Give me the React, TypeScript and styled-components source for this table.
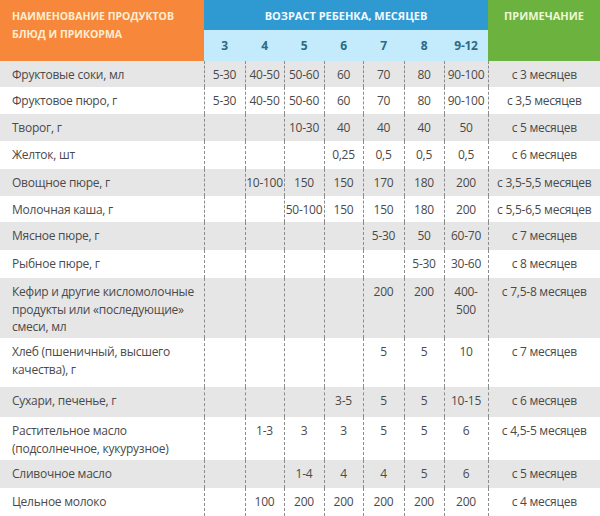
import React from "react";
import styled, { createGlobalStyle } from "styled-components";

const GlobalStyle = createGlobalStyle`
  html, body {
    margin: 0;
    padding: 0;
    background: #fff;
  }
  body {
    font-family: "Open Sans", "Liberation Sans", sans-serif;
  }
`;

const ages = ["3", "4", "5", "6", "7", "8", "9-12"];
const colWidths = [41, 39, 40, 39, 41, 40, 44];

type Row = {
  name: string;
  values: string[];
  note: string;
  h: number;
};

const rows: Row[] = [
  { name: "Фруктовые соки, мл", values: ["5-30", "40-50", "50-60", "60", "70", "80", "90-100"], note: "с 3 месяцев", h: 26 },
  { name: "Фруктовое пюро, г", values: ["5-30", "40-50", "50-60", "60", "70", "80", "90-100"], note: "с 3,5 месяцев", h: 27 },
  { name: "Творог, г", values: ["", "", "10-30", "40", "40", "40", "50"], note: "с 5 месяцев", h: 27 },
  { name: "Желток, шт", values: ["", "", "", "0,25", "0,5", "0,5", "0,5"], note: "с 6 месяцев", h: 28 },
  { name: "Овощное пюре, г", values: ["", "10-100", "150", "150", "170", "180", "200"], note: "с 3,5-5,5 месяцев", h: 27 },
  { name: "Молочная каша, г", values: ["", "", "50-100", "150", "150", "180", "200"], note: "с 5,5-6,5 месяцев", h: 26 },
  { name: "Мясное пюре, г", values: ["", "", "", "", "5-30", "50", "60-70"], note: "с 7 месяцев", h: 28 },
  { name: "Рыбное пюре, г", values: ["", "", "", "", "", "5-30", "30-60"], note: "с 8 месяцев", h: 28 },
  { name: "Кефир и другие кисломолочные продукты или «последующие» смеси, мл", values: ["", "", "", "", "200", "200", "400-\n500"], note: "с 7,5-8 месяцев", h: 60 },
  { name: "Хлеб (пшеничный, высшего качества), г", values: ["", "", "", "", "5", "5", "10"], note: "с 7 месяцев", h: 49 },
  { name: "Сухари, печенье, г", values: ["", "", "", "3-5", "5", "5", "10-15"], note: "с 6 месяцев", h: 30 },
  { name: "Растительное масло (подсолнечное, кукурузное)", values: ["", "1-3", "3", "3", "5", "5", "6"], note: "с 4,5-5 месяцев", h: 43 },
  { name: "Сливочное масло", values: ["", "", "1-4", "4", "4", "5", "6"], note: "с 5 месяцев", h: 28 },
  { name: "Цельное молоко", values: ["", "100", "200", "200", "200", "200", "200"], note: "с 4 месяцев", h: 28 },
];

const Table = styled.table`
  width: 600px;
  border-collapse: collapse;
  table-layout: fixed;
  font-size: 12px;
  letter-spacing: -0.25px;
  color: #4a4a4a;
`;

const HeadCell = styled.th<{ $bg: string }>`
  background: ${(p) => p.$bg};
  color: #fdeed3;
  font-size: 10.5px;
  font-weight: 700;
  letter-spacing: 0;
  text-transform: uppercase;
  padding: 0;
  vertical-align: top;
`;

const NameHead = styled(HeadCell)`
  text-align: left;
  padding: 7px 12px 0;
  line-height: 18px;
`;

const AgeHead = styled(HeadCell)`
  height: 30px;
  color: #f4faff;
  font-size: 11px;
  text-align: center;
  vertical-align: middle;
`;

const NoteHead = styled(HeadCell)`
  color: #eef7d6;
  font-size: 11px;
  text-align: center;
  padding-top: 8px;
`;

const AgeCell = styled.th`
  background: #c4ebfb;
  color: #2c6b86;
  font-size: 12px;
  font-weight: 700;
  height: 31px;
  padding: 0;
  text-align: center;
  vertical-align: middle;
`;

const BodyRow = styled.tr<{ $shaded: boolean }>`
  background: ${(p) => (p.$shaded ? "#e6e6e6" : "#ffffff")};
`;

const NameCell = styled.td`
  padding: 5px 8px 0 12px;
  line-height: 17.5px;
  vertical-align: top;
  text-align: left;
`;

const ValueCell = styled.td`
  padding: 5px 0 0;
  line-height: 17.5px;
  vertical-align: top;
  text-align: center;
  border-left: 1px dashed #8c8c8c;
  white-space: pre;
  overflow: visible;
`;

const NoteCell = styled(ValueCell)``;

export default function App() {
  return (
    <>
      <GlobalStyle />
      <Table>
        <colgroup>
          <col style={{ width: 204 }} />
          {colWidths.map((w, i) => (
            <col key={i} style={{ width: w }} />
          ))}
          <col style={{ width: 112 }} />
        </colgroup>
        <thead>
          <tr>
            <NameHead $bg="#f7883b" rowSpan={2}>
              Наименование продуктов
              <br />
              блюд и прикорма
            </NameHead>
            <AgeHead $bg="#2f9ad2" colSpan={7}>
              Возраст ребенка, месяцев
            </AgeHead>
            <NoteHead $bg="#6bb23f" rowSpan={2}>
              Примечание
            </NoteHead>
          </tr>
          <tr>
            {ages.map((a) => (
              <AgeCell key={a}>{a}</AgeCell>
            ))}
          </tr>
        </thead>
        <tbody>
          {rows.map((r, i) => (
            <BodyRow key={r.name} $shaded={i % 2 === 0} style={{ height: r.h }}>
              <NameCell>{r.name}</NameCell>
              {r.values.map((v, j) => (
                <ValueCell key={j}>{v}</ValueCell>
              ))}
              <NoteCell>{r.note}</NoteCell>
            </BodyRow>
          ))}
        </tbody>
      </Table>
    </>
  );
}
